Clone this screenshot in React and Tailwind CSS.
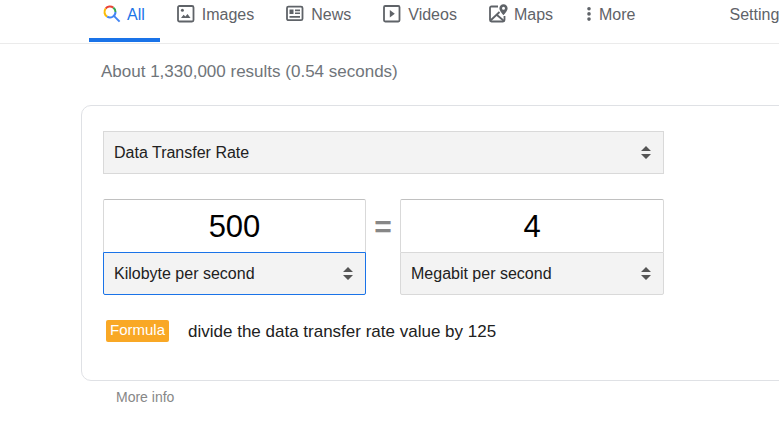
import { useState } from "react";

const rates = {
    "Kilobyte per second": 8000,
    "Megabit per second": 1000000,
    "Megabyte per second": 8000000,
    "Gigabit per second": 1000000000,
};

function SearchIcon() {
    return (
        <svg className="size-[18px] shrink-0" viewBox="0 0 18 18" fill="none" strokeWidth="2">
            <path d="M2.6 3.6A5.5 5.5 0 0 1 10.3 2.6" stroke="#ea4335" />
            <path d="M10.3 2.6A5.5 5.5 0 0 1 12.5 7" stroke="#34a853" />
            <path d="M2.6 3.6A5.5 5.5 0 0 0 4.2 11.7" stroke="#fbbc04" />
            <path d="M4.2 11.7A5.5 5.5 0 0 0 12.5 7" stroke="#4285f4" />
            <path d="M10.9 10.9L16.6 16.6" stroke="#4285f4" />
        </svg>
    );
}

function ImagesIcon() {
    return (
        <svg className="size-[18px] shrink-0" viewBox="0 0 18 18">
            <rect x="1" y="1" width="15.5" height="15.5" rx="1.5" fill="none" stroke="currentColor" strokeWidth="1.8" />
            <circle cx="5.4" cy="5.2" r="1.5" fill="currentColor" />
            <path d="M4 13l2.6-3.2 1.8 1.6L10.5 9l3 4z" fill="currentColor" />
        </svg>
    );
}

function NewsIcon() {
    return (
        <svg className="size-[18px] shrink-0" viewBox="0 0 18 18">
            <rect x="1" y="1.6" width="15.5" height="13.6" rx="1.5" fill="none" stroke="currentColor" strokeWidth="1.8" />
            <path d="M3.5 4.5h4v4.5h-4zM9 4.5h5v1.7H9zM9 7.5h5v1.6H9zM3.5 11h10.5v1.7h-10.5z" fill="currentColor" />
        </svg>
    );
}

function VideosIcon() {
    return (
        <svg className="size-[18px] shrink-0" viewBox="0 0 18 18">
            <rect x="1" y="1" width="15.5" height="15.5" rx="1.2" fill="none" stroke="currentColor" strokeWidth="1.8" />
            <path d="M6.8 5v7.5l5-3.7z" fill="currentColor" />
        </svg>
    );
}

function MapsIcon() {
    return (
        <svg className="size-[18px] shrink-0 overflow-visible" viewBox="0 0 18 18">
            <path d="M9 1.5H2.5Q1 1.5 1 3v12Q1 16.5 2.5 16.5H14q1.5 0 1.5-1.5V11" fill="none" stroke="currentColor" strokeWidth="1.8" />
            <path d="M1.5 15.5l9-8.5M8 10l7 6" fill="none" stroke="currentColor" strokeWidth="1.8" />
            <path fillRule="evenodd" d="M14.5-.8c-2.4 0-4.1 1.8-4.1 4 0 2.9 4.1 7 4.1 7s4.1-4.1 4.1-7c0-2.2-1.7-4-4.1-4zm0 2.6a1.5 1.5 0 1 1 0 3 1.5 1.5 0 0 1 0-3z" fill="currentColor" />
        </svg>
    );
}

function MoreIcon() {
    return (
        <svg className="h-[18px] w-2 shrink-0" viewBox="0 0 8 18" fill="currentColor">
            <circle cx="4" cy="3.7" r="1.8" />
            <circle cx="4" cy="8.9" r="1.8" />
            <circle cx="4" cy="14.1" r="1.8" />
        </svg>
    );
}

const tabs = [
    { name: "Images", icon: <ImagesIcon /> },
    { name: "News", icon: <NewsIcon /> },
    { name: "Videos", icon: <VideosIcon /> },
    { name: "Maps", icon: <MapsIcon /> },
];

function Picker({ label, value, options, onChange, className }) {
    return (
        <div className="relative">
            <select
                aria-label={label}
                value={value}
                onChange={(e) => onChange(e.target.value)}
                className={`block h-[43px] w-full appearance-none border bg-[#f3f3f3] pr-8 pl-[10px] text-base text-[#212121] outline-none ${className}`}
            >
                {options.map((option) => (
                    <option key={option}>{option}</option>
                ))}
            </select>
            {/* up / down arrows */}
            <svg className="pointer-events-none absolute top-[14px] right-[13px] h-[15px] w-[10px]" viewBox="0 0 10 15" fill="#555">
                <path d="M0 6l5-5L10 6zM0 9l5 5L10 9z" />
            </svg>
        </div>
    );
}

export default function App() {
    const [category, setCategory] = useState("Data Transfer Rate");
    const [amount, setAmount] = useState("500");
    const [from, setFrom] = useState("Kilobyte per second");
    const [to, setTo] = useState("Megabit per second");

    const result = (Number(amount) * rates[from]) / rates[to];

    return (
        <div className="overflow-hidden bg-white font-['Liberation_Sans',Arial,sans-serif] text-[#5f6368]">
            <nav className="flex h-11 gap-[2px] border-b border-[#ebebeb] pl-[89px] text-base whitespace-nowrap">
                <a href="#all" className="flex h-[42px] shrink-0 gap-[6px] border-b-4 border-[#1a73e8] pt-[5px] pr-[15px] pl-[14px] text-[#1a73e8]">
                    <SearchIcon />
                    <span className="leading-[19px]">All</span>
                </a>
                {tabs.map((tab) => (
                    <a key={tab.name} href={`#${tab.name.toLowerCase()}`} className="flex shrink-0 gap-[7px] px-[15px] pt-[5px]">
                        {tab.icon}
                        <span className="leading-[19px]">{tab.name}</span>
                    </a>
                ))}
                <button className="flex shrink-0 gap-[6px] px-[15px] pt-[5px]">
                    <MoreIcon />
                    <span className="leading-[19px]">More</span>
                </button>
                <a href="#settings" className="ml-[62px] shrink-0 px-[15px] pt-[5px] leading-[19px]">Settings</a>
            </nav>

            <p className="mt-[18px] ml-[101px] text-[17px] leading-5 text-[#70757a]">
                About 1,330,000 results (0.54 seconds)
            </p>

            <div className="mt-[23px] ml-[81px] min-w-[815px] rounded-[10px] border border-[#dfe1e5] px-[21px] pt-[25px] pb-9">
                <div className="w-[561px]">
                    <Picker
                        label="Category"
                        value={category}
                        options={["Data Transfer Rate"]}
                        onChange={setCategory}
                        className="border-[#d9d9d9]"
                    />

                    <div className="mt-[25px] flex">
                        <div className="w-[263px]">
                            <input
                                aria-label="Amount"
                                value={amount}
                                onChange={(e) => setAmount(e.target.value)}
                                className="block h-[53px] w-full rounded-t-xs border border-b-0 border-[#d9d9d9] border-t-[#c0c0c0] pt-[2px] text-center text-[31px] text-black outline-none"
                            />
                            <Picker
                                label="From"
                                value={from}
                                options={Object.keys(rates)}
                                onChange={setFrom}
                                className="rounded-b-xs border-[#1a73e8]"
                            />
                        </div>
                        <div className="w-[34px] pt-[10px] text-center text-[30px] leading-9 font-bold text-[#878787]">=</div>
                        <div className="flex-1">
                            <input
                                aria-label="Result"
                                value={result}
                                readOnly
                                className="block h-[53px] w-full rounded-t-xs border border-b-0 border-[#d9d9d9] border-t-[#c0c0c0] pt-[2px] text-center text-[31px] text-black outline-none"
                            />
                            <Picker
                                label="To"
                                value={to}
                                options={Object.keys(rates)}
                                onChange={setTo}
                                className="rounded-b-xs border-[#d9d9d9]"
                            />
                        </div>
                    </div>

                    <div className="mt-[25px] ml-[3px] flex items-start gap-[19px]">
                        <span className="rounded-xs bg-[#f9a825] px-1 pb-[2px] text-[15px] leading-5 text-white">Formula</span>
                        <span className="text-[17px] leading-6 text-[#212121]">divide the data transfer rate value by 125</span>
                    </div>
                </div>
            </div>

            <a href="#info" className="mt-[7px] ml-[116px] inline-block text-sm leading-[18px] text-[#878787]">More info</a>
        </div>
    );
}
